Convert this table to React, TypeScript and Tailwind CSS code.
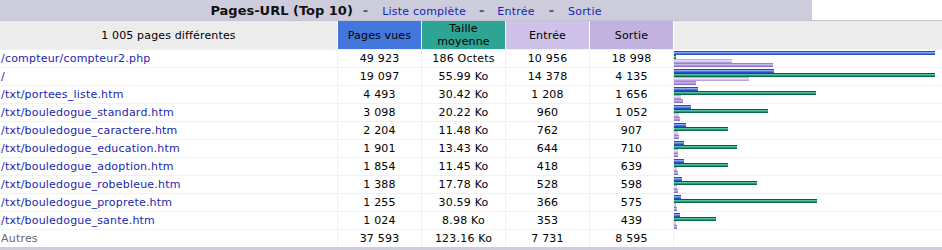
import React from "react";

type Row = {
  url: string;
  pages: number;
  sizeLabel: string;
  sizeKo: number;
  entry: number;
  exit: number;
};

const rows: Row[] = [
  { url: "/compteur/compteur2.php", pages: 49923, sizeLabel: "186 Octets", sizeKo: 186 / 1024, entry: 10956, exit: 18998 },
  { url: "/", pages: 19097, sizeLabel: "55.99 Ko", sizeKo: 55.99, entry: 14378, exit: 4135 },
  { url: "/txt/portees_liste.htm", pages: 4493, sizeLabel: "30.42 Ko", sizeKo: 30.42, entry: 1208, exit: 1656 },
  { url: "/txt/bouledogue_standard.htm", pages: 3098, sizeLabel: "20.22 Ko", sizeKo: 20.22, entry: 960, exit: 1052 },
  { url: "/txt/bouledogue_caractere.htm", pages: 2204, sizeLabel: "11.48 Ko", sizeKo: 11.48, entry: 762, exit: 907 },
  { url: "/txt/bouledogue_education.htm", pages: 1901, sizeLabel: "13.43 Ko", sizeKo: 13.43, entry: 644, exit: 710 },
  { url: "/txt/bouledogue_adoption.htm", pages: 1854, sizeLabel: "11.45 Ko", sizeKo: 11.45, entry: 418, exit: 639 },
  { url: "/txt/bouledogue_robebleue.htm", pages: 1388, sizeLabel: "17.78 Ko", sizeKo: 17.78, entry: 528, exit: 598 },
  { url: "/txt/bouledogue_proprete.htm", pages: 1255, sizeLabel: "30.59 Ko", sizeKo: 30.59, entry: 366, exit: 575 },
  { url: "/txt/bouledogue_sante.htm", pages: 1024, sizeLabel: "8.98 Ko", sizeKo: 8.98, entry: 353, exit: 439 },
];

const fmt = (n: number) => n.toString().replace(/\B(?=(\d{3})+(?!\d))/g, " ");

const BAR = 260;
const maxP = 49923;
const maxK = 55.99;
const w = (v: number, max: number) => Math.floor((BAR * v) / max) + 1;

const gridCols = "grid grid-cols-[337px_83px_83px_83px_83px_268px] gap-x-px";

function Bars({ r }: { r: Row }) {
  return (
    <div className="flex flex-col pt-px">
      <div
        className="h-[4px] bg-[linear-gradient(to_bottom,#2848b8_0_25%,#86a8f6_25%_50%,#4d7be6_50%_75%,#2a4fc6_75%)]"
        style={{ width: w(r.pages, maxP) }}
      />
      <div
        className="h-[4px] bg-[linear-gradient(to_bottom,#0a5c3c_0_25%,#52c2a2_25%_50%,#22a07c_50%_75%,#0b6a48_75%)]"
        style={{ width: Math.max(2, w(r.sizeKo, maxK)) }}
      />
      <div
        className="h-[4px] bg-[linear-gradient(to_bottom,#bcaae6_0_25%,#e6def7_25%_50%,#d2c5ef_50%_75%,#b6a2e2_75%)]"
        style={{ width: w(r.entry, maxP) }}
      />
      <div
        className="h-[4px] bg-[linear-gradient(to_bottom,#9a80d4_0_25%,#c8b8ec_25%_50%,#ab94de_50%_75%,#8f74cc_75%)]"
        style={{ width: w(r.exit, maxP) }}
      />
    </div>
  );
}

function DataRow({ r }: { r: Row }) {
  return (
    <div className="bg-[#f1f1f1] pt-px">
      <div className={`${gridCols} h-[17px] text-[11px] leading-[17px] tracking-[0.2px] text-black`}>
        <div className="bg-white pl-px text-[#1a1fb0] whitespace-nowrap">{r.url}</div>
        <div className="bg-white text-center">{fmt(r.pages)}</div>
        <div className="bg-white text-center">{r.sizeLabel}</div>
        <div className="bg-white text-center">{fmt(r.entry)}</div>
        <div className="bg-white text-center">{fmt(r.exit)}</div>
        <div className="bg-white">
          <Bars r={r} />
        </div>
      </div>
    </div>
  );
}

export default function App() {
  return (
    <div
      className="w-[942px] h-[250px] bg-white overflow-hidden"
      style={{ fontFamily: '"DejaVu Sans", Verdana, sans-serif' }}
    >
      {/* Title */}
      <div className="flex h-[20px]">
        <div className="w-[812px] bg-[#ccccdd] flex items-baseline justify-center pt-[3px] leading-[15px]">
          <span className="text-[13px] font-bold text-[#111]">Pages-URL (Top 10)</span>
          <span className="text-[13px] font-bold text-[#555] ml-[10px] mr-[14px]">-</span>
          <a className="text-[11px] tracking-[0.2px] text-[#1a1fb0]" href="#">Liste complète</a>
          <span className="text-[13px] font-bold text-[#555] mx-[13px]">-</span>
          <a className="text-[11px] tracking-[0.2px] text-[#1a1fb0]" href="#">Entrée</a>
          <span className="text-[13px] font-bold text-[#555] mx-[14px]">-</span>
          <a className="text-[11px] tracking-[0.2px] text-[#1a1fb0]" href="#">Sortie</a>
        </div>
        <div className="flex-1 bg-white" />
      </div>
      <div className="h-px bg-[#c2c2d0]" />

      {/* Header */}
      <div className="bg-white">
        <div className={`${gridCols} h-[28px] text-[11px] leading-[13px] tracking-[0.15px] text-black`}>
          <div className="bg-[#ececec] flex items-center justify-center">1 005 pages différentes</div>
          <div className="bg-[#4477dd] flex items-center justify-center">Pages vues</div>
          <div className="bg-[#2ea495] flex items-center justify-center text-center">
            Taille
            <br />
            moyenne
          </div>
          <div className="bg-[#cec2e8] flex items-center justify-center">Entrée</div>
          <div className="bg-[#c1b2e0] flex items-center justify-center">Sortie</div>
          <div className="bg-[#ececec]" />
        </div>
      </div>

      {/* Rows */}
      {rows.map((r) => (
        <DataRow key={r.url} r={r} />
      ))}

      {/* Autres */}
      <div className="bg-[#f1f1f1] pt-px">
        <div className={`${gridCols} h-[17px] text-[11px] leading-[17px] tracking-[0.2px] text-black`}>
          <div className="bg-white pl-px text-[#666677]">Autres</div>
          <div className="bg-white text-center">37 593</div>
          <div className="bg-white text-center">123.16 Ko</div>
          <div className="bg-white text-center">7 731</div>
          <div className="bg-white text-center">8 595</div>
          <div className="bg-white" />
        </div>
      </div>

      <div className="h-[3px] bg-[#ccccdd]" />
    </div>
  );
}
